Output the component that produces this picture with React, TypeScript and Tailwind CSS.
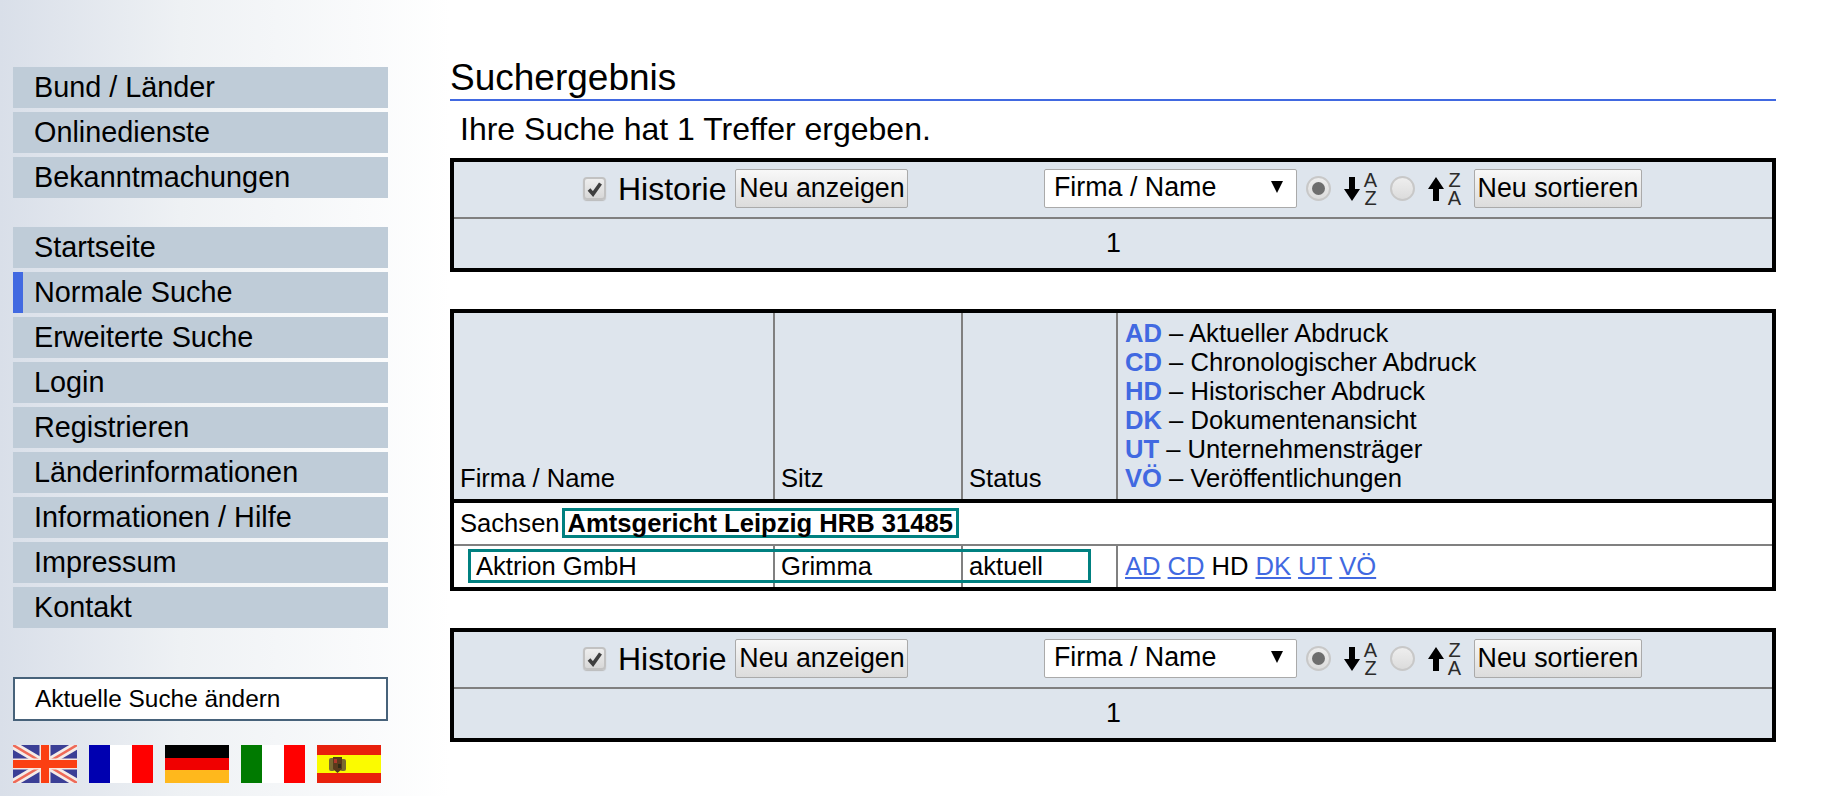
import { Fragment } from 'react';

const groupA = ['Bund / Länder', 'Onlinedienste', 'Bekanntmachungen'];
const groupB = [
  'Startseite',
  'Normale Suche',
  'Erweiterte Suche',
  'Login',
  'Registrieren',
  'Länderinformationen',
  'Informationen / Hilfe',
  'Impressum',
  'Kontakt',
];
const legend = [
  ['AD', 'Aktueller Abdruck'],
  ['CD', 'Chronologischer Abdruck'],
  ['HD', 'Historischer Abdruck'],
  ['DK', 'Dokumentenansicht'],
  ['UT', 'Unternehmensträger'],
  ['VÖ', 'Veröffentlichungen'],
];

function NavItem({ label, active }: { label: string; active?: boolean }) {
  return (
    <a className="relative flex h-[41px] items-center bg-[#bfccd8] pl-[21px] text-[28.8px] text-black">
      {active && <span className="absolute inset-y-0 left-0 w-[10px] bg-[#4169e1]" />}
      {label}
    </a>
  );
}

function FlagUk() {
  return (
    <svg viewBox="0 0 64 38" className="h-[38px] w-[64px]" preserveAspectRatio="none">
      <rect width="64" height="38" fill="#3b3f96" />
      <path d="M0 0 64 38M64 0 0 38" stroke="#f4ece8" strokeWidth="8" />
      <path d="M0 0 64 38M64 0 0 38" stroke="#ee6a58" strokeWidth="2.5" />
      <path d="M32 0V38M0 19H64" stroke="#f6e6de" strokeWidth="11" />
      <path d="M32 0V38M0 19H64" stroke="#fb3f12" strokeWidth="8" />
    </svg>
  );
}

function FlagStripes({ colors }: { colors: string[] }) {
  return (
    <div className="flex h-[38px] w-[64px]">
      {colors.map((c, i) => (
        <span key={i} className="flex-1" style={{ backgroundColor: c }} />
      ))}
    </div>
  );
}

function FlagDe() {
  return (
    <div className="flex h-[38px] w-[64px] flex-col">
      <span className="flex-1 bg-black" />
      <span className="flex-1 bg-[#f00000]" />
      <span className="flex-1 bg-[#ffb81c]" />
    </div>
  );
}

function FlagEs() {
  return (
    <svg viewBox="0 0 64 38" className="h-[38px] w-[64px]" preserveAspectRatio="none">
      <rect width="64" height="38" fill="#e8200c" />
      <rect y="10" width="64" height="18" fill="#fbfb00" />
      <g className="blur-[0.5px]">
        <rect x="12" y="13" width="6" height="13" rx="2" fill="#7a6a30" />
        <rect x="23" y="14" width="6" height="12" rx="2" fill="#7a6a30" />
        <path d="M16 12H25V24L20.5 28 16 24Z" fill="#5a3a1c" />
        <rect x="17" y="14" width="3" height="4" fill="#b0382a" />
        <rect x="21" y="19" width="3" height="4" fill="#2f2a14" />
      </g>
    </svg>
  );
}

function SortIcon({ dir, top, bottom }: { dir: 'down' | 'up'; top: string; bottom: string }) {
  return (
    <span className="flex w-[34px] items-center gap-[3px]">
      <svg viewBox="0 0 16 24" className="h-[24px] w-[16px]">
        {dir === 'down' ? (
          <path d="M5 0H11V12H16L8 24 0 12H5Z" fill="#000" />
        ) : (
          <path d="M5 24H11V12H16L8 0 0 12H5Z" fill="#000" />
        )}
      </svg>
      <span className="flex w-[15px] flex-col items-center text-[20px] leading-[18px] text-[#2b2b2b]">
        <span>{top}</span>
        <span>{bottom}</span>
      </span>
    </span>
  );
}

function Checkbox() {
  return (
    <span className="flex h-[23px] w-[23px] items-center justify-center rounded-[4px] border-2 border-[#c2c2c2] bg-gradient-to-b from-[#eeeeee] to-[#d8d8d8] shadow-[0_1px_1px_#bbb]">
      <svg viewBox="0 0 16 16" className="h-[16px] w-[16px]">
        <path d="M2 8.5 6 13 13.5 2.5" fill="none" stroke="#3f3f3f" strokeWidth="3.6" />
      </svg>
    </span>
  );
}

function Radio({ checked }: { checked?: boolean }) {
  return (
    <span className="flex h-[25px] w-[25px] items-center justify-center rounded-full border-2 border-[#c8c8c8] bg-gradient-to-b from-[#eeeeee] to-[#dcdcdc]">
      {checked && <span className="h-[13px] w-[13px] rounded-full bg-[#6e6e6e]" />}
    </span>
  );
}

function GrayButton({ children, width }: { children: string; width: string }) {
  return (
    <button
      type="button"
      className={`${width} h-[39px] rounded-[2px] border border-[#aaa] bg-gradient-to-b from-[#f8f8f8] to-[#dcdcdc] text-[26.8px] leading-none text-black`}
    >
      {children}
    </button>
  );
}

function Toolbar() {
  return (
    <div className="border-4 border-black bg-[#dee5ed]">
      <div className="relative h-[57px] border-b-2 border-[#808080]">
        <div className="absolute left-[129px] top-[7px] flex h-[39px] items-center">
          <Checkbox />
          <span className="ml-[12px] text-[32px]">Historie</span>
          <span className="ml-[9px]">
            <GrayButton width="w-[173px]">Neu anzeigen</GrayButton>
          </span>
        </div>
        <div className="absolute left-[590px] top-[7px] flex h-[39px] items-center">
          <div className="flex h-[39px] w-[253px] items-center justify-between rounded-[2px] border border-[#aaa] bg-white pb-[3px] pl-[9px] pr-[13px] text-[26.8px] text-black">
            <span>Firma / Name</span>
            <svg viewBox="0 0 12 12" className="h-[12px] w-[12px]">
              <path d="M0 0H12L6 12Z" fill="#000" />
            </svg>
          </div>
          <span className="ml-[9px]">
            <Radio checked />
          </span>
          <span className="ml-[13px]">
            <SortIcon dir="down" top="A" bottom="Z" />
          </span>
          <span className="ml-[12px]">
            <Radio />
          </span>
          <span className="ml-[13px]">
            <SortIcon dir="up" top="Z" bottom="A" />
          </span>
          <span className="ml-[12px]">
            <GrayButton width="w-[168px]">Neu sortieren</GrayButton>
          </span>
        </div>
      </div>
      <div className="flex h-[49px] items-center justify-center pl-[1px] text-[26.8px]">1</div>
    </div>
  );
}

export default function App() {
  return (
    <div className="flex min-h-[796px] bg-gradient-to-r from-[#d9dfe9] via-[#eef1f4] via-[180px] to-white to-[450px] font-['Liberation_Sans',Arial,sans-serif] text-black">
      <aside className="ml-[13px] w-[375px] shrink-0 pt-[67px]">
        <nav className="flex flex-col gap-[4px]">
          {groupA.map((l) => (
            <NavItem key={l} label={l} />
          ))}
        </nav>
        <nav className="mt-[29px] flex flex-col gap-[4px]">
          {groupB.map((l) => (
            <NavItem key={l} label={l} active={l === 'Normale Suche'} />
          ))}
        </nav>
        <a className="mt-[49px] flex h-[44px] items-center border-2 border-[#47627a] bg-white pl-[20px] text-[24.4px]">
          Aktuelle Suche ändern
        </a>
        <div className="mt-[24px] flex gap-[12px]">
          <FlagUk />
          <FlagStripes colors={['#0000b0', '#ffffff', '#ff0000']} />
          <FlagDe />
          <FlagStripes colors={['#007a00', '#ffffff', '#ff0000']} />
          <FlagEs />
        </div>
      </aside>

      <main className="ml-[62px] w-[1326px] shrink-0 pt-[54px]">
        <h1 className="h-[47px] border-b-2 border-[#4169e1] text-[37px] leading-[47px]">Suchergebnis</h1>
        <p className="h-[57px] pl-[10px] pt-[11px] text-[32px] leading-[34px]">Ihre Suche hat 1 Treffer ergeben.</p>

        <Toolbar />

        <div className="relative mt-[37px] border-4 border-black text-[25.6px]">
          <div className="grid h-[190px] grid-cols-[321px_188px_155px_1fr] border-b-4 border-black bg-[#dee5ed] leading-[29px]">
            <div className="flex items-end border-r-2 border-[#808080] px-[6px] pb-[6px]">Firma / Name</div>
            <div className="flex items-end border-r-2 border-[#808080] px-[6px] pb-[6px]">Sitz</div>
            <div className="flex items-end border-r-2 border-[#808080] px-[6px] pb-[6px]">Status</div>
            <div className="flex flex-col justify-end px-[7px] pb-[6px]">
              {legend.map(([k, v]) => (
                <div key={k}>
                  <b className="text-[#4169e1]">{k}</b> – {v}
                </div>
              ))}
            </div>
          </div>
          <div className="flex h-[43px] items-center border-b-2 border-[#808080] bg-white pb-[1px] pl-[6px]">
            Sachsen
            <b className="ml-[2px] flex h-[30px] items-center border-[3px] border-[#008080] px-[3px]">
              Amtsgericht Leipzig HRB 31485
            </b>
          </div>
          <div className="grid h-[41px] grid-cols-[321px_188px_155px_1fr] bg-white">
            <div className="flex items-center border-r-2 border-[#808080] pl-[22px]">Aktrion GmbH</div>
            <div className="flex items-center border-r-2 border-[#808080] pl-[6px]">Grimma</div>
            <div className="flex items-center border-r-2 border-[#808080] pl-[6px]">aktuell</div>
            <div className="flex items-center gap-[7px] pl-[7px]">
              {['AD', 'CD', 'HD', 'DK', 'UT', 'VÖ'].map((k) => (
                <Fragment key={k}>
                  {k === 'HD' ? <span>{k}</span> : <a className="text-[#4169e1] underline">{k}</a>}
                </Fragment>
              ))}
            </div>
          </div>
          <span className="pointer-events-none absolute left-[14px] top-[236px] h-[34px] w-[623px] border-[3px] border-[#008080]" />
        </div>

        <div className="mt-[37px]">
          <Toolbar />
        </div>
      </main>
    </div>
  );
}
